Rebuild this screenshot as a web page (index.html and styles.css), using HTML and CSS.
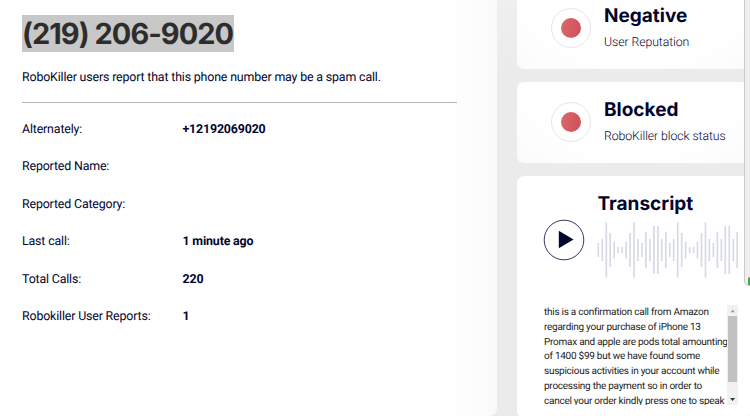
FILE: index.html
```html
<!DOCTYPE html>
<html lang="en">
<head>
<meta charset="utf-8">
<title>(219) 206-9020</title>
<link rel="stylesheet" href="styles.css">
</head>
<body>
<main class="page">
  <section class="report">
    <h1 class="number"><span class="selected">(219) 206-9020</span></h1>
    <p class="summary">RoboKiller users report that this phone number may be a spam call.</p>
    <dl class="facts">
      <dt>Alternately:</dt><dd>+12192069020</dd>
      <dt>Reported Name:</dt><dd></dd>
      <dt>Reported Category:</dt><dd></dd>
      <dt>Last call:</dt><dd>1 minute ago</dd>
      <dt>Total Calls:</dt><dd>220</dd>
      <dt>Robokiller User Reports:</dt><dd>1</dd>
    </dl>
  </section>
  <aside class="side">
    <div class="card status first">
      <span class="ring"><span class="dot"></span></span>
      <div><h2 class="negative">Negative</h2><p class="reputation">User Reputation</p></div>
    </div>
    <div class="card status">
      <span class="ring"><span class="dot"></span></span>
      <div><h2 class="blocked">Blocked</h2><p class="block-status">RoboKiller block status</p></div>
    </div>
    <div class="card transcript">
      <h2>Transcript</h2>
      <div class="player">
        <svg class="play" viewBox="0 0 42 42"><circle cx="21" cy="21" r="19.8"/><path d="M15.8 11.8v17.4L30.5 20.5z"/></svg>
        <svg class="wave" viewBox="0 0 144 56"><path d="M1.3 21v14M5.3 17v22M9.3 .5v55M13.2 11v34M17.2 19.5v17M21.2 24.7v6.6M25.1 24.7v6.6M29.1 19.5v17M33.1 11v34M37 .5v55M41 17v22M45 21v14M48.9 10v36M52.9 17v22M56.9 4v48M60.9 4v48M64.8 17v22M68.8 10v36M72.8 21v14M76.7 17v22M80.7 .5v55M84.7 11v34M88.6 19.5v17M92.6 24.7v6.6M96.6 24.7v6.6M100.5 19.5v17M104.5 11v34M108.5 .5v55M112.4 17v22M116.4 21v14M120.4 10v36M124.4 17v22M128.3 4v48M132.3 4v48M136.3 17v22M140.2 10v36"/></svg>
      </div>
      <div class="scroller">
        <p class="speech">this is a confirmation call from Amazon<br>regarding your purchase of iPhone 13<br>Promax and apple are pods total amounting<br>of 1400 $99 but we have found some<br>suspicious activities in your account while<br>processing the payment so in order to<br>cancel your order kindly press one to speak</p>
        <div class="bar">
          <svg viewBox="0 0 10 11"><path class="up" d="M3 7.2h4.4L5.2 4.8z"/></svg>
          <span class="thumb"></span>
          <svg viewBox="0 0 10 11"><path class="down" d="M2.6 4h5L5.1 7z"/></svg>
        </div>
      </div>
    </div>
  </aside>
  <div class="window-edge"><span class="chip"></span></div>
</main>
</body>
</html>
```
FILE: styles.css
```css
* { box-sizing: border-box; margin: 0; padding: 0; }
body { width: 750px; height: 416px; overflow: hidden; font-family: Roboto, sans-serif; color: #02052e; text-rendering: geometricPrecision; }
.page { position: relative; display: flex; height: 416px; overflow: hidden; background: linear-gradient(#efefef, #ebebeb 80px); }
.report { flex: none; width: 497px; padding: 15px 40px 0 22px; background: linear-gradient(90deg, #fff 445px, #fafafa); border-bottom-right-radius: 8px; }
.number { height: 37px; font: 700 29px/37px Inter, sans-serif; color: #2d2d2d; white-space: nowrap; }
.selected { display: inline-block; width: 212px; height: 37px; background: #c8c8c8; letter-spacing: -.97px; }
.summary { margin-top: 17px; height: 33px; font-size: 12.4px; letter-spacing: -.16px; line-height: 18px; white-space: nowrap; }
.facts { display: grid; grid-template-columns: 160.5px 1fr; grid-auto-rows: 37.5px; border-top: 1px solid #b5b5b5; padding-top: 7.5px; font-size: 12.4px; letter-spacing: -.16px; line-height: 37.5px; white-space: nowrap; }
.facts dd { font-weight: 700; }
.side { flex: none; width: 234px; margin-left: 20px; display: flex; flex-direction: column; gap: 13px; }
.card { background: #fff; border-radius: 7px; flex: none; }
.status { height: 81px; display: flex; padding: 20px 0 0 34px; gap: 13px; background: radial-gradient(ellipse at 50% 0, #fff 60%, #fbfbfb); }
.first { height: 69px; padding-top: 8px; border-radius: 0 0 7px 7px; }
.ring { width: 40px; height: 40px; border: 1px solid #e6e6e8; border-radius: 50%; display: grid; place-items: center; flex: none; }
.dot { width: 20px; height: 20px; border-radius: 50%; background: linear-gradient(100deg, #d96a6b, #cf4e58); }
h2 { font: 700 19px/24px Inter, sans-serif; white-space: nowrap; }
.status h2 { margin-top: -4px; }
.status p { margin-top: 7px; font-size: 12.3px; letter-spacing: -.08px; line-height: 17px; font-weight: 300; white-space: nowrap; }
.transcript { height: 242px; padding: 16px 0 0 26px; }
.transcript h2 { margin-left: 54.5px; }
.player { display: flex; height: 56px; margin-top: 6px; }
.play { width: 42px; height: 42px; margin-top: -3px; fill: #02052e; }
.play circle { fill: none; stroke: #30385f; stroke-width: 1; }
.wave { width: 144px; height: 56px; margin-left: 12px; fill: none; stroke: #d7dae6; stroke-width: 1.7; }
.scroller { display: flex; width: 196px; height: 100px; margin-top: 27px; padding-left: 1px; overflow: hidden; }
.speech { flex: none; width: 183px; padding-top: 1px; font-size: 10px; letter-spacing: -.26px; line-height: 14.75px; color: #222; white-space: nowrap; }
.bar { width: 11px; background: #f1f1f1; display: flex; flex-direction: column; flex: none; }
.bar svg { width: 11px; height: 11px; }
.up { fill: #999; }
.down { fill: #333; }
.thumb { height: 66px; margin: 0 1px 12px; background: #c1c1c1; }
.window-edge { position: absolute; left: 744px; top: -8px; width: 20px; height: 294px; border: 1px solid #c9c9c9; border-radius: 5px; background: #eee; overflow: hidden; }
.chip { display: block; width: 8px; height: 9px; margin: 284px 0 0 3px; border-radius: 2px; background: #45a849; }
```
